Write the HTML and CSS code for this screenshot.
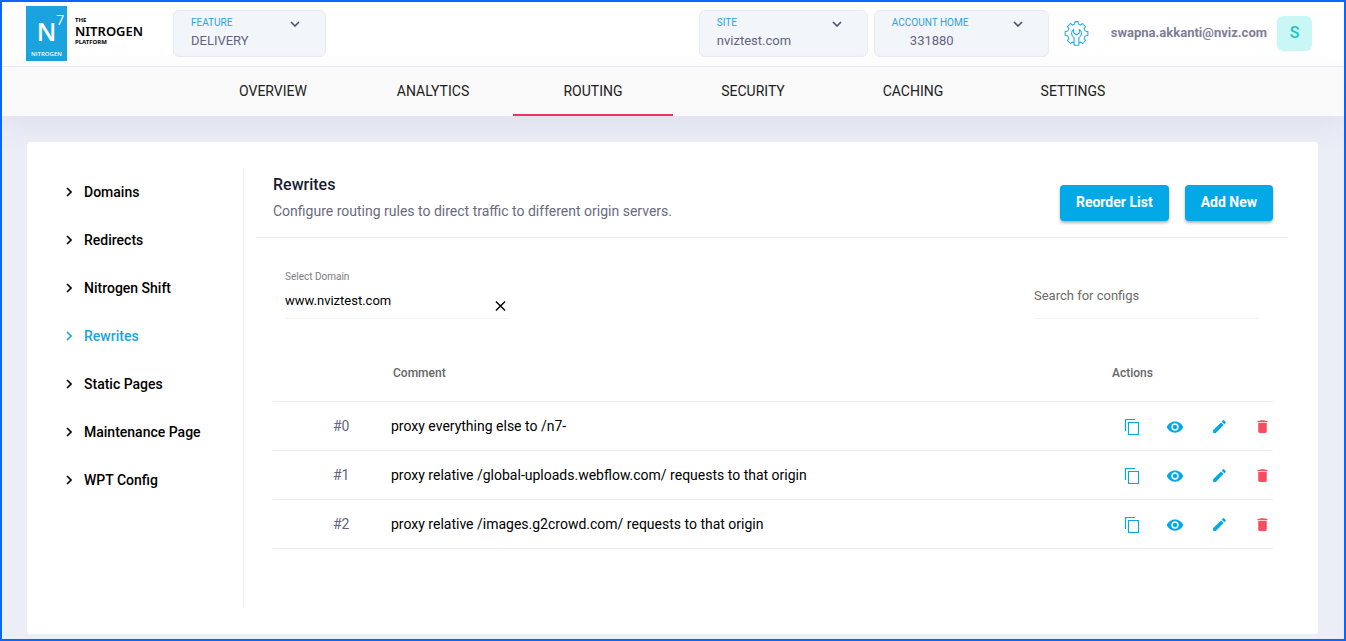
FILE: index.html
```html
<!DOCTYPE html>
<html lang="en">
<head>
<meta charset="utf-8">
<title>Nitrogen Platform – Rewrites</title>
<link rel="stylesheet" href="styles.css">
</head>
<body>
<svg class="sprite" aria-hidden="true">
  <symbol id="chevron-down" viewBox="0 0 10 6"><path d="M1 1l4 4 4-4" fill="none" stroke="currentColor" stroke-width="1.6"/></symbol>
  <symbol id="chevron-right" viewBox="0 0 6 10"><path d="M1 1l4 4-4 4" fill="none" stroke="currentColor" stroke-width="1.6"/></symbol>
  <symbol id="copy" viewBox="0 0 16 18"><path d="M1.500 13V1.500H11M4.500 4.500h10v12h-10z" fill="none" stroke="currentColor" stroke-width="1.200"/></symbol>
  <symbol id="eye" viewBox="0 0 24 24"><path fill="currentColor" d="M12 4.500C7 4.500 2.730 7.610 1 12c1.730 4.390 6 7.500 11 7.500s9.270-3.110 11-7.500c-1.730-4.390-6-7.500-11-7.500zM12 17c-2.760 0-5-2.240-5-5s2.240-5 5-5 5 2.240 5 5-2.240 5-5 5zm0-8c-1.660 0-3 1.340-3 3s1.340 3 3 3 3-1.340 3-3-1.340-3-3-3z"/></symbol>
  <symbol id="pencil" viewBox="0 0 24 24"><path fill="currentColor" d="M3 17.250V21h3.750L17.810 9.940l-3.750-3.750L3 17.250zM20.710 7.040a1 1 0 0 0 0-1.410l-2.340-2.340a1 1 0 0 0-1.410 0l-1.830 1.830 3.750 3.750 1.830-1.830z"/></symbol>
  <symbol id="trash" viewBox="0 0 24 24"><path fill="currentColor" d="M6 19c0 1.100.9 2 2 2h8c1.100 0 2-.9 2-2V7H6v12zM19 4h-3.500l-1-1h-5l-1 1H5v2h14V4z"/></symbol>
</svg>
<div class="app">
  <header class="topbar">
    <a class="brand" href="#" aria-label="The Nitrogen Platform">
      <span class="brand-mark"><span class="brand-symbol">N<sup>7</sup></span><span class="brand-caption">NITROGEN</span></span>
      <span class="brand-name"><small>THE</small><strong>NITROGEN</strong><small>PLATFORM</small></span>
    </a>
    <button class="picker picker-feature" type="button"><span class="picker-label">FEATURE</span><span class="picker-value">DELIVERY</span><svg class="picker-arrow"><use href="#chevron-down"/></svg></button>
    <div class="account">
      <button class="picker picker-site" type="button"><span class="picker-label">SITE</span><span class="picker-value">nviztest.com</span><svg class="picker-arrow"><use href="#chevron-down"/></svg></button>
      <button class="picker picker-home" type="button"><span class="picker-label">ACCOUNT HOME</span><span class="picker-value">331880</span><svg class="picker-arrow"><use href="#chevron-down"/></svg></button>
      <button class="gear" type="button" aria-label="Preferences">
        <svg viewBox="0 0 24 24" fill="none" stroke="currentColor" stroke-width="1" stroke-linejoin="round">
          <path d="M9.500 20.800l-1.300-.6-2 1.400-2.900-2.900 1.400-2-.9-2.200-2.700-.5v-4l2.700-.5.9-2.200-1.400-2 2.900-2.900 2 1.400 1.800-.8.500-2.400h3l.5 2.400 1.800.8 2-1.400 2.900 2.900-1.400 2 .9 2.200 2.700.5v4l-2.700.5-.9 2.200 1.400 2-2.900 2.900-2-1.400-1.300.6"/>
          <path d="M9.700 23.300v-7.300a4.700 4.700 0 0 1-.4-8v3.300l2.700 2 2.700-2V8a4.700 4.700 0 0 1-.4 8v7.300z"/>
        </svg>
      </button>
      <span class="email">swapna.akkanti@nviz.com</span>
      <button class="avatar" type="button">S</button>
    </div>
  </header>
  <nav class="tabs" aria-label="Main">
    <a href="#">OVERVIEW</a><a href="#">ANALYTICS</a><a class="active" href="#" aria-current="page">ROUTING</a><a href="#">SECURITY</a><a href="#">CACHING</a><a href="#">SETTINGS</a>
  </nav>
  <main class="panel">
    <nav class="side" aria-label="Routing">
      <a href="#"><svg><use href="#chevron-right"/></svg>Domains</a>
      <a href="#"><svg><use href="#chevron-right"/></svg>Redirects</a>
      <a href="#"><svg><use href="#chevron-right"/></svg>Nitrogen Shift</a>
      <a class="active" href="#" aria-current="page"><svg><use href="#chevron-right"/></svg>Rewrites</a>
      <a href="#"><svg><use href="#chevron-right"/></svg>Static Pages</a>
      <a href="#"><svg><use href="#chevron-right"/></svg>Maintenance Page</a>
      <a href="#"><svg><use href="#chevron-right"/></svg>WPT Config</a>
    </nav>
    <section class="content">
      <div class="heading">
        <div>
          <h1>Rewrites</h1>
          <p>Configure routing rules to direct traffic to different origin servers.</p>
        </div>
        <div class="buttons">
          <button class="primary" type="button">Reorder List</button>
          <button class="primary" type="button">Add New</button>
        </div>
      </div>
      <div class="filters">
        <div class="domain">
          <label for="domain">Select Domain</label>
          <div class="domain-row">
            <input id="domain" type="text" value="www.nviztest.com">
            <button type="button" aria-label="Clear domain"><svg viewBox="0 0 12 12"><path d="M1 1l10 10M11 1L1 11" stroke="currentColor" stroke-width="1.500"/></svg></button>
          </div>
        </div>
        <input class="search" type="text" placeholder="Search for configs" aria-label="Search for configs">
      </div>
      <table class="rules">
        <thead><tr><th class="col-index"></th><th class="col-comment">Comment</th><th class="col-actions">Actions</th></tr></thead>
        <tbody>
          <tr><td class="col-index">#0</td><td class="col-comment">proxy everything else to /n7-</td><td class="col-actions"><div class="actions"><button type="button" aria-label="Copy"><svg class="icon-copy"><use href="#copy"/></svg></button><button type="button" aria-label="View"><svg class="icon-eye"><use href="#eye"/></svg></button><button type="button" aria-label="Edit"><svg class="icon"><use href="#pencil"/></svg></button><button class="danger" type="button" aria-label="Delete"><svg class="icon"><use href="#trash"/></svg></button></div></td></tr>
          <tr><td class="col-index">#1</td><td class="col-comment">proxy relative /global-uploads.webflow.com/ requests to that origin</td><td class="col-actions"><div class="actions"><button type="button" aria-label="Copy"><svg class="icon-copy"><use href="#copy"/></svg></button><button type="button" aria-label="View"><svg class="icon-eye"><use href="#eye"/></svg></button><button type="button" aria-label="Edit"><svg class="icon"><use href="#pencil"/></svg></button><button class="danger" type="button" aria-label="Delete"><svg class="icon"><use href="#trash"/></svg></button></div></td></tr>
          <tr><td class="col-index">#2</td><td class="col-comment">proxy relative /images.g2crowd.com/ requests to that origin</td><td class="col-actions"><div class="actions"><button type="button" aria-label="Copy"><svg class="icon-copy"><use href="#copy"/></svg></button><button type="button" aria-label="View"><svg class="icon-eye"><use href="#eye"/></svg></button><button type="button" aria-label="Edit"><svg class="icon"><use href="#pencil"/></svg></button><button class="danger" type="button" aria-label="Delete"><svg class="icon"><use href="#trash"/></svg></button></div></td></tr>
        </tbody>
      </table>
    </section>
  </main>
</div>
</body>
</html>
```
FILE: styles.css
```css
* { box-sizing: border-box; }
body { margin: 0; font: 14px/20px Roboto, sans-serif; color: #000; background: #ebeef7; }
a { color: inherit; text-decoration: none; }
button { font: inherit; color: inherit; border: 0; padding: 0; background: none; cursor: pointer; }
input { font: inherit; color: inherit; border: 0; padding: 0; background: none; min-width: 0; outline: 0; }
svg { display: block; }
.sprite { position: absolute; width: 0; height: 0; }
.app { display: flex; flex-direction: column; min-height: 100vh; border: 2px solid #0a66ff; }

.topbar { display: flex; align-items: center; height: 65px; padding: 0 32px 2px 24px; background: #fff; border-bottom: 1px solid #ebebf3; }
.brand { display: flex; align-items: center; gap: 8px; width: 147px; }
.brand-mark { display: flex; flex-direction: column; align-items: center; justify-content: space-between; width: 41px; height: 55px; padding: 7px 0 2px; background: #1ba3df; color: #fff; font-family: "Open Sans", sans-serif; }
.brand-symbol { display: flex; padding-left: 8px; font-size: 25px; line-height: 36px; font-weight: 600; }
.brand-symbol sup { font-size: 14px; line-height: 14px; font-weight: 400; }
.brand-caption { font-size: 6px; line-height: 9px; font-weight: 600; }
.brand-name { display: flex; flex-direction: column; padding-bottom: 4px; font-family: "Noto Sans", sans-serif; }
.brand-name strong { font-size: 13px; line-height: 14px; font-weight: 600; }
.brand-name small { font-size: 6px; line-height: 8px; font-weight: 700; }
.picker { display: grid; grid-template-columns: 1fr 10px; align-content: center; height: 47px; padding: 0 25px 0 17px; text-align: left; background: #f2f5f9; border: 1px solid #e8ebf2; border-radius: 6px; }
.picker-label { grid-row: 1; font-size: 10px; line-height: 16px; color: #27a4e4; white-space: nowrap; }
.picker-value { grid-row: 2; font-size: 13px; line-height: 20px; color: #646480; }
.picker-arrow { grid-row: 1; grid-column: 2; width: 10px; height: 6px; margin-top: 6px; color: #4f4f6b; }
.picker-feature { width: 153px; }
.picker-site { width: 169px; }
.picker-home { width: 175px; }
.picker-home .picker-value { padding-left: 18px; }
.account { display: flex; align-items: center; margin-left: auto; gap: 6px; }
.gear { margin-left: 9px; color: #1fa9e6; }
.gear svg { width: 25px; height: 25px; }
.email { margin: 0 4px 0 16px; font-size: 13px; font-weight: 700; color: #7e7e98; }
.avatar { width: 35px; height: 35px; border-radius: 6px; background: #c9f7f5; color: #1bc5bd; font-size: 16px; font-weight: 500; }

.tabs { display: flex; justify-content: center; height: 49px; background: #f9f9f9; box-shadow: 0 10px 30px rgba(82, 63, 105, .08); }
.tabs a { flex: 0 1 160px; text-align: center; line-height: 48px; color: #212121; border-bottom: 2px solid transparent; }
.tabs a.active { border-color: #f0315f; }

.panel { flex: 1; display: flex; margin: 26px 26px 5px 25px; padding: 26px 30px 26px 25px; background: #fff; border-radius: 4px; }
.side { flex: 0 0 192px; padding-left: 14px; border-right: 1px solid #ebedf3; }
.side a { display: flex; align-items: center; gap: 12px; height: 48px; font-weight: 500; }
.side svg { width: 6px; height: 10px; }
.side a.active { color: #1ba3df; }
.content { flex: 1; padding-left: 12px; min-width: 0; }
.heading { display: flex; justify-content: space-between; height: 70px; padding: 5px 15px 0 17px; border-bottom: 1px solid #ebedf0; }
.heading h1 { margin: 0; font-size: 16px; line-height: 24px; font-weight: 500; color: #181c32; }
.heading p { margin: 4px 0 0; color: #6a6a80; }
.buttons { display: flex; gap: 16px; padding-top: 12px; }
.primary { height: 36px; padding: 0 16px 2px; font-weight: 700; color: #fff; background: #03a9e7; border-radius: 4px; box-shadow: 0 2px 3px rgba(0, 0, 0, .3); }
.filters { display: flex; justify-content: space-between; align-items: flex-end; padding: 30px 29px 0; }
.domain { width: 225px; border-bottom: 1px solid #f2f2f2; }
.domain label { display: block; font-size: 10px; line-height: 18px; color: #7c7c7c; }
.domain-row { display: flex; height: 32px; justify-content: space-between; }
.domain-row input { width: 180px; height: 28px; font-size: 13px; }
.domain-row button { padding: 7px 4px 0 0; }
.domain-row button svg { width: 11px; height: 12px; }
.search { width: 225px; height: 47px; border-bottom: 1px solid #f2f2f2; font-size: 13px; }
.search::placeholder { color: #6b6b6b; opacity: 1; }

.rules { width: calc(100% - 32px); margin: 27px 15px 0 17px; border-collapse: collapse; table-layout: fixed; }
.rules th { height: 55px; padding: 0; text-align: left; font-size: 12px; font-weight: 500; color: #666; }
.rules td { height: 49px; padding: 0; }
.rules tr { border-bottom: 1px solid #ebebf3; }
.rules .col-index { width: 118px; padding-left: 60px; color: #646480; }
.rules th.col-comment { padding-left: 2px; }
.rules .col-actions { width: 161px; }
.actions { display: flex; justify-content: space-between; align-items: center; padding: 2px 2px 0 12px; color: #03a9e7; }
.icon { width: 17px; height: 17px; }
.icon-eye { width: 18px; height: 18px; }
.icon-copy { width: 16px; height: 18px; }
.actions .danger { color: #f64e60; }
```
